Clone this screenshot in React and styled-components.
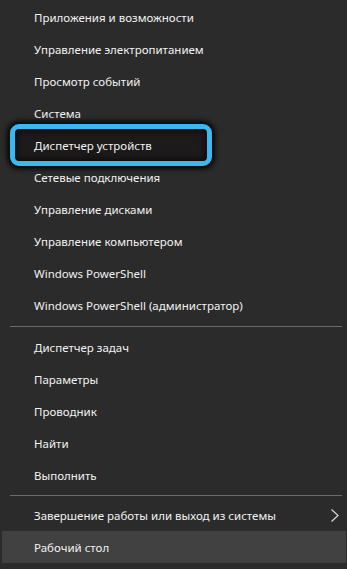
import React from "react"
import styled, {createGlobalStyle, css} from "styled-components"

const GlobalStyle = createGlobalStyle`
  html, body {
    margin: 0;
    padding: 0;
    background: #2b2b2b;
  }
`

const Menu = styled.div`
  width: 347px;
  height: 569px;
  box-sizing: border-box;
  padding: 1px 1px 0 2px;
  background: #2b2b2b;
  font-family: "Noto Sans", "Open Sans", sans-serif;
  font-size: 11.5px;
  color: #f2f2f2;
  display: flex;
  flex-direction: column;
  overflow: hidden;
`

const Item = styled.div`
  position: relative;
  height: 32px;
  display: flex;
  align-items: center;
  padding-left: 32px;
  padding-right: 6px;
  ${props => props.hover && css`
    background: #414141;
  `}
  ${props => props.marked && css`
    &::before {
      content: "";
      position: absolute;
      left: 8px;
      top: -5px;
      width: 202px;
      height: 42px;
      box-sizing: border-box;
      border: 5px solid #3bb8f0;
      border-radius: 9px;
      background: #1c1a1a;
      box-shadow: 0 0 5px 3px rgba(0, 0, 0, 0.85), inset 0 0 6px 2px rgba(0, 0, 0, 0.6);
    }
  `}
`

const Label = styled.span`
  position: relative;
  flex: 1;
  white-space: nowrap;
`

const Separator = styled.div`
  height: 1px;
  margin: ${props => props.space} 4px ${props => props.space} 8px;
  background: #6b6b6b;
`

const Chevron = () => (
  <svg width="10" height="15" viewBox="0 0 10 15" fill="none">
    <path d="M1.5 1.5 L8 7.5 L1.5 13.5" stroke="#d8d8d8" strokeWidth="1.2" />
  </svg>
)

const firstGroup = [
  "Приложения и возможности",
  "Управление электропитанием",
  "Просмотр событий",
  "Система",
  "Диспетчер устройств",
  "Сетевые подключения",
  "Управление дисками",
  "Управление компьютером",
  "Windows PowerShell",
  "Windows PowerShell (администратор)",
]

const secondGroup = ["Диспетчер задач", "Параметры", "Проводник", "Найти", "Выполнить"]

const App = () => {
  return (
    <>
      <GlobalStyle />
      <Menu>
        {firstGroup.map(text => (
          <Item key={text} marked={text === "Диспетчер устройств"}>
            <Label>{text}</Label>
          </Item>
        ))}
        <Separator space="4.5px" />
        {secondGroup.map(text => (
          <Item key={text}>
            <Label>{text}</Label>
          </Item>
        ))}
        <Separator space="3.5px" />
        <Item>
          <Label>Завершение работы или выход из системы</Label>
          <Chevron />
        </Item>
        <Item hover>
          <Label>Рабочий стол</Label>
        </Item>
      </Menu>
    </>
  )
}

export default App
